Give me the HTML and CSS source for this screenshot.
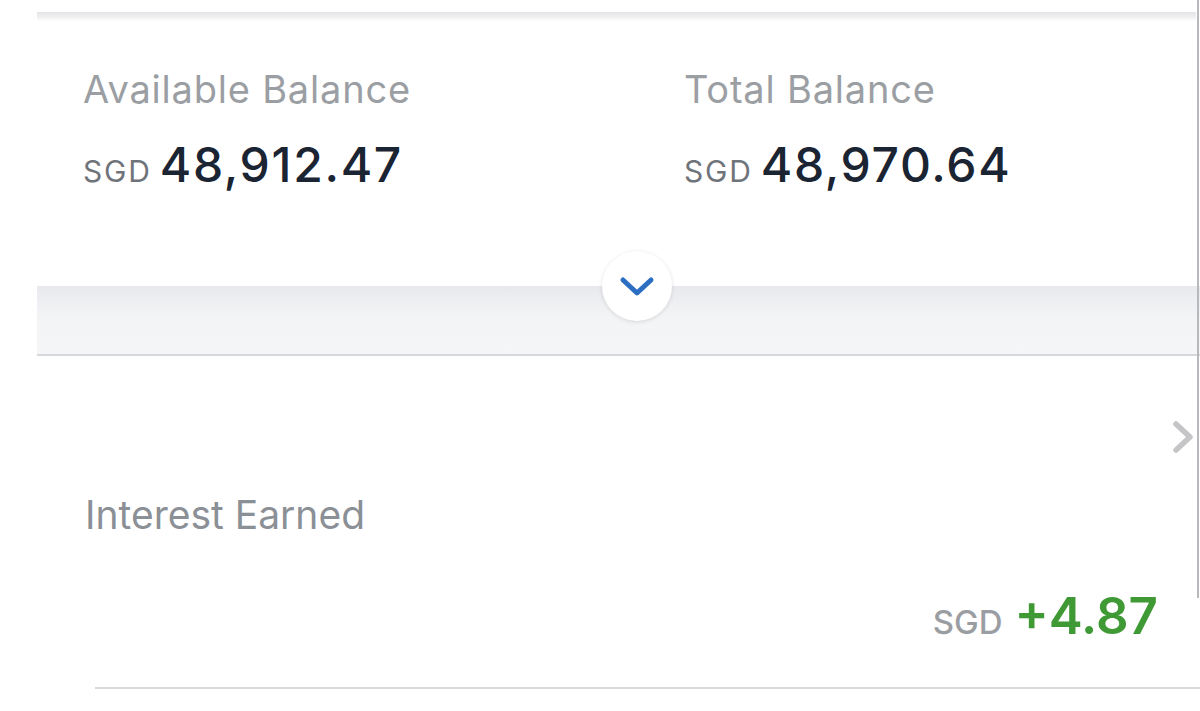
FILE: index.html
```html
<!DOCTYPE html>
<html lang="en">
<head>
    <meta charset="UTF-8">
    <meta name="viewport" content="width=device-width, initial-scale=1.0">
    <title>Account Balance</title>
    <link rel="stylesheet" href="styles.css">
</head>
<body>

    <div class="screen">
        <div class="top-edge"></div>

        <section class="balances">
            <div class="balance">
                <p class="label">Available Balance</p>
                <p class="amount"><span class="ccy">SGD</span><span class="value">48,912.47</span></p>
            </div>
            <div class="balance">
                <p class="label">Total Balance</p>
                <p class="amount"><span class="ccy">SGD</span><span class="value">48,970.64</span></p>
            </div>
        </section>

        <div class="expander">
            <button class="toggle" aria-label="Show more">
                <svg width="36" height="22" viewBox="0 0 36 22">
                    <path d="M4 4 L18 17 L32 4" fill="none" stroke="#2c6fc2" stroke-width="5" stroke-linecap="round" stroke-linejoin="round"/>
                </svg>
            </button>
        </div>

        <section class="interest">
            <div class="chevron-row">
                <svg width="26" height="36" viewBox="0 0 26 36">
                    <path d="M6 5 L20 18 L6 31" fill="none" stroke="#c5c5c8" stroke-width="5.5" stroke-linecap="round" stroke-linejoin="round"/>
                </svg>
            </div>
            <p class="interest-label">Interest Earned</p>
            <p class="interest-amount"><span class="ccy">SGD</span><span class="gain">+4.87</span></p>
        </section>

        <div class="divider"></div>
    </div>

</body>
</html>
```

FILE: styles.css
```css
* {
    box-sizing: border-box;
    margin: 0;
    padding: 0;
}

body {
    background: #ffffff;
    font-family: Inter, 'Noto Sans', sans-serif;
    width: 1200px;
    height: 711px;
    overflow: hidden;
    position: relative;
}

/* thin frame edge on the right side of the screen */
body::after {
    content: "";
    position: absolute;
    top: 0;
    left: 1197px;
    width: 2px;
    height: 598px;
    background: #b8b9bc;
}

.top-edge {
    margin: 12px 4px 0 37px;
    height: 9px;
    background: linear-gradient(#e3e4e6, #f1f1f3 60%, #fdfdfd);
}

.balances {
    display: grid;
    grid-template-columns: 601px 1fr;
    padding-left: 83px;
    margin-top: 46px;
}

.label {
    font-size: 38px;
    line-height: 1.2;
    letter-spacing: 0.8px;
    color: #9b9fa4;
    font-weight: 400;
}

.amount {
    display: flex;
    align-items: baseline;
    gap: 8px;
    margin-top: 23px;
    line-height: 1.2;
}

.ccy {
    font-size: 30px;
    letter-spacing: 1.8px;
    color: #6f747a;
    font-weight: 400;
}

.value {
    font-size: 48px;
    letter-spacing: 1.7px;
    font-weight: 500;
    color: #1b2432;
}

.expander {
    position: relative;
    margin: 93px 0 0 37px;
    height: 70px;
    background: linear-gradient(#e8e9ec, #f3f4f6 45%, #f5f6f8);
    border-bottom: 2px solid #d7d8dc;
}

.toggle {
    position: absolute;
    left: 565px;
    top: -35px;
    width: 70px;
    height: 70px;
    border: none;
    border-radius: 50%;
    background: #ffffff;
    box-shadow: 0 1px 4px rgba(0, 0, 0, 0.12);
    display: flex;
    justify-content: center;
    align-items: center;
    padding-top: 2px;
    cursor: pointer;
}

.interest {
    padding: 0 0 0 85px;
}

.chevron-row {
    display: flex;
    justify-content: flex-end;
    margin-top: 63px;
    padding-right: 4px;
}

.chevron-row svg {
    display: block;
}

.interest-label {
    font-size: 39px;
    line-height: 1.2;
    color: #8b9096;
    margin-top: 37px;
}

.interest-amount {
    display: flex;
    justify-content: flex-end;
    align-items: baseline;
    gap: 12px;
    padding-right: 42px;
    margin-top: 46px;
    line-height: 1.2;
}

.interest-amount .ccy {
    font-size: 33px;
    letter-spacing: 0;
    font-weight: 500;
    color: #9a9ea3;
}

.gain {
    font-size: 51px;
    font-weight: 600;
    color: #3f9a36;
}

.divider {
    margin: 41px 0 0 95px;
    height: 2px;
    background: #d9d9db;
}
```
